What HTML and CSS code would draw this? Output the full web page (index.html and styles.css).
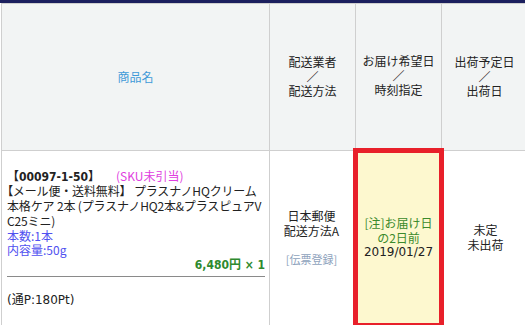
FILE: index.html
```html
<!DOCTYPE html>
<html lang="ja">
<head>
<meta charset="utf-8">
<title>受注一覧</title>
<link rel="stylesheet" href="styles.css">
</head>
<body>
<div class="topbar"></div>
<table class="orders">
  <colgroup>
    <col class="col-name">
    <col class="col-narrow">
    <col class="col-narrow">
    <col class="col-narrow">
  </colgroup>
  <thead>
    <tr>
      <th class="th-name">商品名</th>
      <th>配送業者<br>／<br>配送方法</th>
      <th>お届け希望日<br>／<br>時刻指定</th>
      <th>出荷予定日<br>／<br>出荷日</th>
    </tr>
  </thead>
  <tbody>
    <tr>
      <td class="td-name">
        <div class="item-line"><span class="code">【00097-1-50】</span><span class="sku">(SKU未引当)</span></div>
        <div class="item-title"><span class="lead-bracket">【</span>メール便・送料無料】 プラスナノHQクリーム 本格ケア 2本 (プラスナノHQ2本&amp;プラスピュアVC25ミニ)</div>
        <div class="opt">本数:1本</div>
        <div class="opt">内容量:50g</div>
        <div class="price">6,480円 × 1</div>
        <hr class="sep">
        <div class="point">(通P:180Pt)</div>
      </td>
      <td class="td-center">
        <div>日本郵便</div>
        <div>配送方法A</div>
        <div class="slip">[伝票登録]</div>
      </td>
      <td class="td-center td-alert">
        <div class="note">[注]お届け日<br>の2日前</div>
        <div class="num">2019/01/27</div>
      </td>
      <td class="td-center">
        <div>未定</div>
        <div>未出荷</div>
      </td>
    </tr>
  </tbody>
</table>
</body>
</html>
```
FILE: styles.css
```css
html, body {
  margin: 0;
  padding: 0;
  background: #ffffff;
  overflow: hidden;
}

body {
  font-family: "Noto Sans CJK JP", "Noto Sans", sans-serif;
  font-size: 12px;
  color: #222222;
  width: 525px;
  height: 325px;
}

.topbar {
  height: 3px;
  background: #1b1f5e;
}

.orders {
  border-collapse: collapse;
  table-layout: fixed;
  width: 527px;
  margin-left: 1px;
  border-top: 1px solid #e4e6e8;
}

.col-name { width: 268px; }
.col-narrow { width: 86px; }

.orders th,
.orders td {
  border: 1px solid #cfcfcf;
}

.orders th {
  background: #f2f4f4;
  font-weight: normal;
  color: #222222;
  height: 144px;
  line-height: 14.5px;
  text-align: center;
  vertical-align: middle;
  padding: 0;
}

.orders th.th-name {
  color: #3f9ad8;
}

.orders td {
  vertical-align: middle;
  line-height: 14.7px;
  height: 170px;
  padding: 0;
}

.td-name {
  padding: 0 2px 0 5px !important;
  word-break: break-all;
}

.item-title {
  letter-spacing: -0.15px;
}

.code {
  font-family: "DejaVu Sans Condensed", "DejaVu Sans", "Noto Sans CJK JP", sans-serif;
  font-weight: bold;
}

.sku {
  color: #e03ee0;
  margin-left: 16px;
}

.lead-bracket {
  font-feature-settings: "palt" 1;
}

.opt {
  color: #5050f0;
}

.price {
  font-family: "DejaVu Sans Condensed", "DejaVu Sans", "Noto Sans CJK JP", sans-serif;
  color: #2e8a2e;
  font-weight: bold;
  text-align: right;
  padding-right: 2px;
}

.sep {
  border: 0;
  border-top: 1px solid #8a8a8a;
  margin: 3px 2px 16px 0;
  height: 0;
}

.point,
.num {
  font-family: "DejaVu Sans", "Noto Sans CJK JP", sans-serif;
}

.td-center {
  text-align: center;
}

.slip {
  color: #8ea2bc;
  font-size: 11px;
  margin-top: 13px;
}

.td-alert {
  background: #fdf8cf;
  border: 5px solid #e8202a !important;
}

.note {
  color: #3b8a2c;
}
```
